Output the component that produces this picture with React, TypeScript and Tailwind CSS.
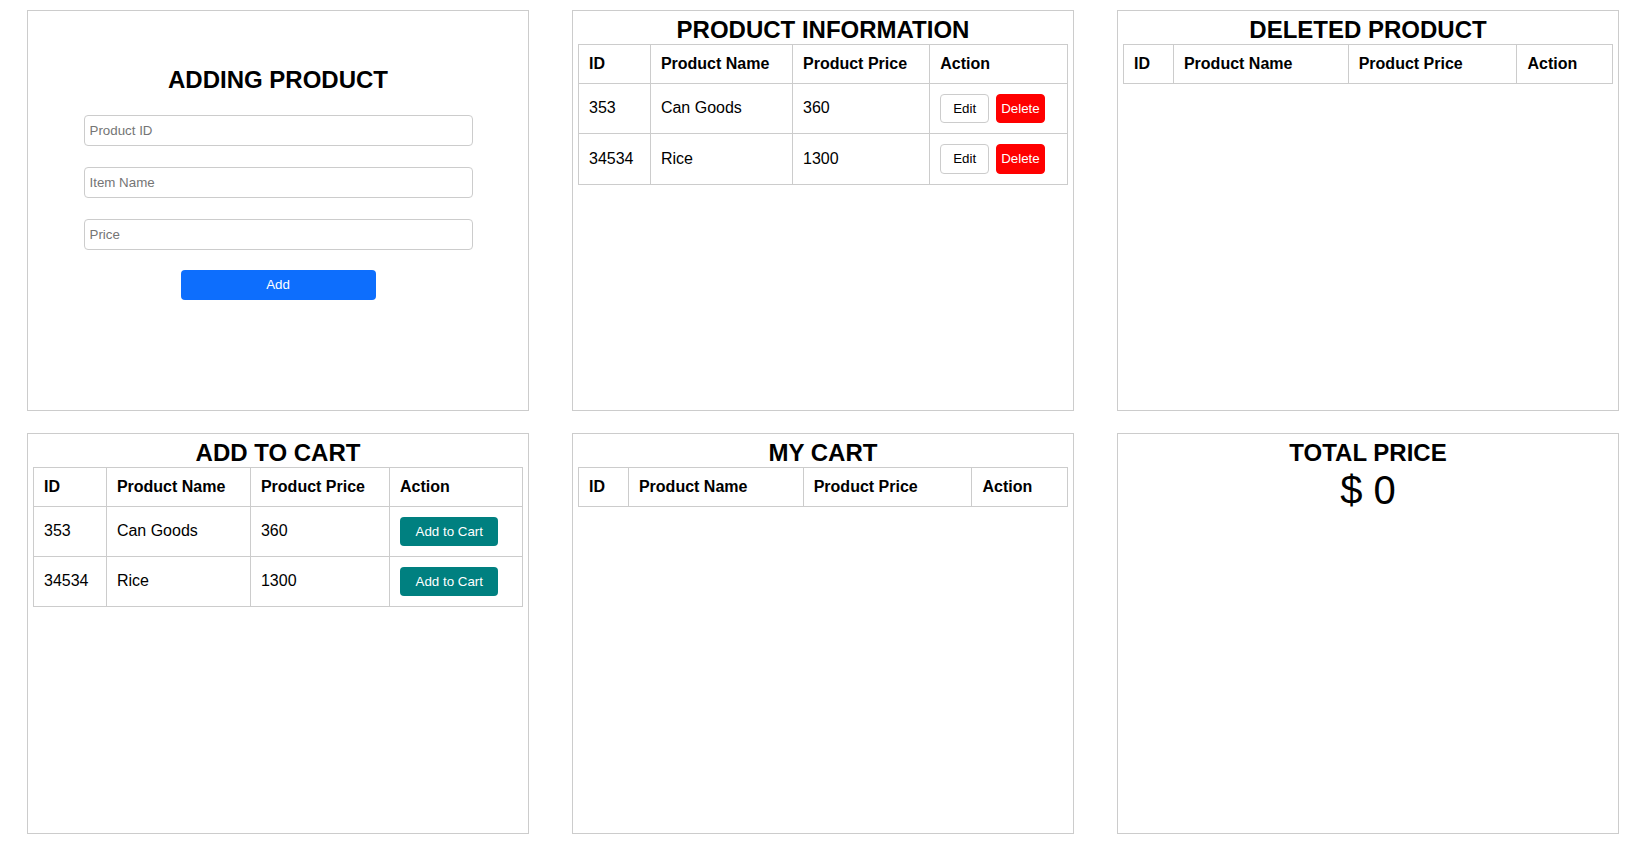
type Item = { id: string; name: string; price: string };

const PRODUCTS: Item[] = [
  { id: '353', name: 'Can Goods', price: '360' },
  { id: '34534', name: 'Rice', price: '1300' },
];

const HEADERS = ['ID', 'Product Name', 'Product Price', 'Action'];

function Panel({ title, children }: { title?: string; children?: React.ReactNode }) {
  return (
    <div className="border border-[#cccccc] p-[5px] h-[401px] bg-white">
      {title && <h2 className="text-[24px] font-bold text-center leading-[1.15] text-black">{title}</h2>}
      {children}
    </div>
  );
}

function Table({ rows, action }: { rows: Item[]; action?: (item: Item) => React.ReactNode }) {
  return (
    <table className="w-full border-collapse text-[16px] leading-[1.15] text-black">
      <thead>
        <tr>
          {HEADERS.map(h => (
            <th key={h} className="border border-[#cccccc] p-[10px] text-left font-bold">{h}</th>
          ))}
        </tr>
      </thead>
      <tbody>
        {rows.map(r => (
          <tr key={r.id}>
            <td className="border border-[#cccccc] p-[10px]">{r.id}</td>
            <td className="border border-[#cccccc] p-[10px]">{r.name}</td>
            <td className="border border-[#cccccc] p-[10px]">{r.price}</td>
            <td className="border border-[#cccccc] p-[10px]">{action && action(r)}</td>
          </tr>
        ))}
      </tbody>
    </table>
  );
}

export default function App() {
  return (
    <div className="min-h-[853px] bg-white pl-[27px] pt-[10px] font-['Liberation_Sans',Arial,sans-serif]">
      <div className="grid grid-cols-[repeat(3,502px)] gap-x-[43px] gap-y-[22px]">
        {/* adding product */}
        <div className="border border-[#cccccc] h-[401px] bg-white pt-[55px]">
          <h2 className="text-[24px] font-bold text-center leading-[1.15] text-black">ADDING PRODUCT</h2>
          <div className="w-[389px] mx-auto mt-[21px] flex flex-col gap-[21px]">
            {['Product ID', 'Item Name', 'Price'].map(p => (
              <input
                key={p}
                placeholder={p}
                className="h-[31px] w-full border border-[#cccccc] rounded-[4px] px-[5px] text-[13.333px] placeholder:text-[#757575] outline-none"
              />
            ))}
            <button className="w-[195px] h-[30px] mx-auto -mt-[1px] bg-[#0d6efd] text-white rounded-[4px] text-[13.333px]">
              Add
            </button>
          </div>
        </div>

        <Panel title="PRODUCT INFORMATION">
          <Table
            rows={PRODUCTS}
            action={() => (
              <div className="flex gap-[7px]">
                <button className="border border-[#cccccc] bg-white rounded-[4px] px-[12px] py-[6px] text-[13.333px] leading-[1.15] text-black">
                  Edit
                </button>
                <button className="border border-[#ff0000] bg-[#ff0000] rounded-[4px] px-[4px] py-[6px] text-[13.333px] leading-[1.15] text-white">
                  Delete
                </button>
              </div>
            )}
          />
        </Panel>

        <Panel title="DELETED PRODUCT">
          <Table rows={[]} />
        </Panel>

        <Panel title="ADD TO CART">
          <Table
            rows={PRODUCTS}
            action={() => (
              <div className="flex">
                <button className="bg-[#008080] text-white rounded-[4px] px-[15.5px] h-[29px] text-[13.333px] leading-[1.15]">
                  Add to Cart
                </button>
              </div>
            )}
          />
        </Panel>

        <Panel title="MY CART">
          <Table rows={[]} />
        </Panel>

        <Panel title="TOTAL PRICE">
          <p className="text-[40px] leading-[1.15] text-center text-black">$ 0</p>
        </Panel>
      </div>
    </div>
  );
}
